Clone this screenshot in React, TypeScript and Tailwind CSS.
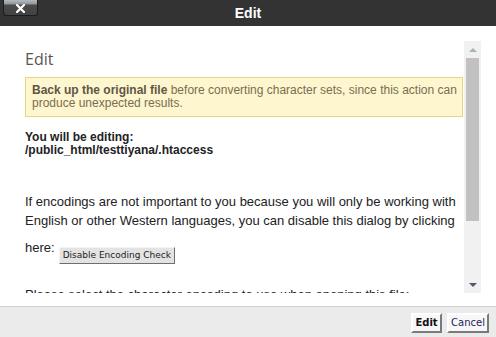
import React from "react";

function CloseButton() {
  return (
    <button
      type="button"
      className="absolute left-[3px] top-0 flex h-[16px] w-[35px] items-center justify-center rounded-b-[3px] border border-t-0 border-[#1c1c1c] bg-[linear-gradient(#b4bcc2_0px,#8e969c_4px,#4a4a4a_5px,#424242_100%)]"
      aria-label="Close"
    >
      <svg width="9" height="9" viewBox="0 0 9 9" className="mt-[1px]">
        <path d="M1 1 L8 8 M8 1 L1 8" stroke="#fff" strokeWidth="2.2" strokeLinecap="square" />
      </svg>
    </button>
  );
}

function Scrollbar() {
  return (
    <div className="flex w-[17px] shrink-0 flex-col bg-[#f1f1f1]">
      <div className="flex h-[17px] items-center justify-center">
        <svg width="8" height="4" viewBox="0 0 8 4">
          <path d="M0 4 L4 0 L8 4 Z" fill="#a3b3b8" />
        </svg>
      </div>
      <div className="mx-[2px] h-[163px] bg-[#c1c1c1]" />
      <div className="flex-1" />
      <div className="flex h-[17px] items-center justify-center">
        <svg width="8" height="4" viewBox="0 0 8 4">
          <path d="M0 0 L8 0 L4 4 Z" fill="#505a6a" />
        </svg>
      </div>
    </div>
  );
}

export default function App() {
  return (
    <div className="flex h-[337px] w-[496px] flex-col overflow-hidden bg-white font-['Liberation_Sans',Arial,sans-serif] text-[#333]">
      <header className="relative flex h-[26px] shrink-0 items-center justify-center bg-[#333]">
        <CloseButton />
        <span className="text-[14px] font-bold leading-none text-white">Edit</span>
      </header>

      <main className="flex min-h-0 flex-1 pb-[13px] pl-[25px] pr-[15px] pt-[15px]">
        <div className="min-w-0 flex-1 overflow-hidden pr-[1px] pt-[7px]">
          <h2 className="font-['Open_Sans',sans-serif] text-[16px] font-normal leading-[22px] text-[#5a5550]">
            Edit
          </h2>

          <div className="mt-[7px] whitespace-nowrap border border-[#e8d67e] bg-[#fef6cf] px-[6px] py-[6px] text-[12px] leading-[13px] text-[#7a6d50]">
            <strong className="font-bold text-[#5f5644]">Back up the original file</strong> before
            converting character sets, since this action can
            <br />
            produce unexpected results.
          </div>

          <div className="mt-[14px] text-[12px] font-bold leading-[13px] text-[#222]">
            You will be editing:
            <br />
            /public_html/testtiyana/.htaccess
          </div>

          <p className="mt-[35px] whitespace-nowrap text-[13px] leading-[19px] text-[#222]">
            If encodings are not important to you because you will only be working with
            <br />
            English or other Western languages, you can disable this dialog by clicking
          </p>

          <div className="mt-[8px] flex items-start text-[13px] leading-[19px] text-[#222]">
            <span>here:</span>
            <button
              type="button"
              className="ml-[4px] mt-[9px] h-[17px] border border-b-[#6e6e6e] border-l-[#f4f4f4] border-r-[#6e6e6e] border-t-[#f4f4f4] bg-[#e3e3e3] px-[3px] font-['DejaVu_Sans',sans-serif] text-[9px] leading-none text-[#222]"
            >
              Disable Encoding Check
            </button>
          </div>

          <p className="mt-[21px] whitespace-nowrap text-[13px] leading-[19px] text-[#222]">
            Please select the character encoding to use when opening this file:
          </p>
        </div>
        <Scrollbar />
      </main>

      <footer className="flex h-[31px] shrink-0 items-start justify-end gap-[5px] border-t border-[#cfcfcf] bg-[#ebebeb] pr-[7px] pt-[6px]">
        <button
          type="button"
          className="h-[20px] w-[31px] border-2 border-b-[#7a7a7a] border-l-white border-r-[#7a7a7a] border-t-white bg-[#f7f7f7] font-['DejaVu_Sans',sans-serif] text-[10px] font-bold leading-none text-[#111]"
        >
          Edit
        </button>
        <button
          type="button"
          className="h-[20px] w-[42px] border-2 border-b-[#7a7a7a] border-l-white border-r-[#7a7a7a] border-t-white bg-[#f7f7f7] font-['DejaVu_Sans',sans-serif] text-[10px] leading-none text-[#1c1c5c]"
        >
          Cancel
        </button>
      </footer>
    </div>
  );
}
